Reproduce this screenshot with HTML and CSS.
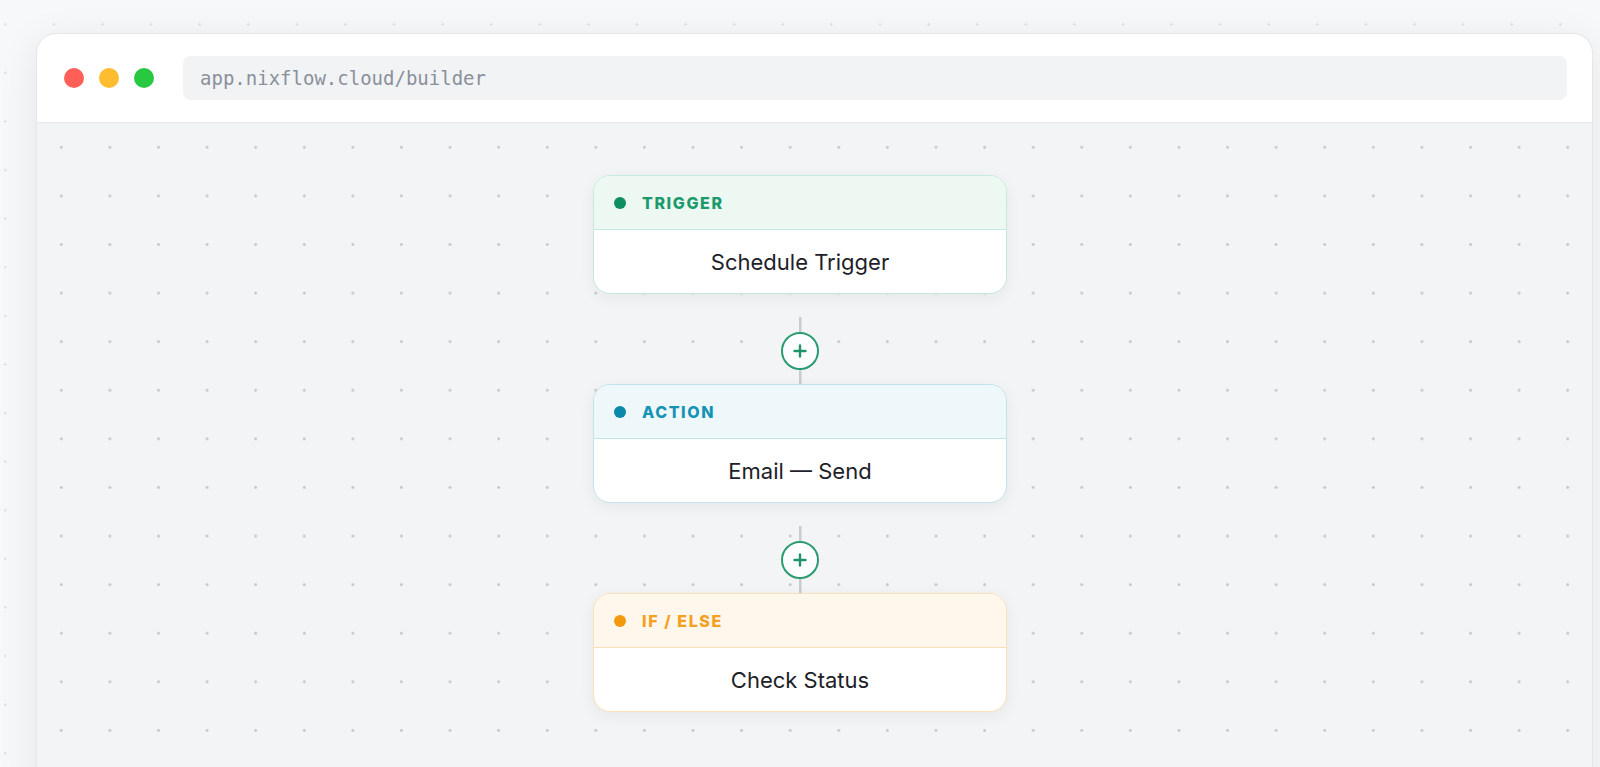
FILE: index.html
```html
<!DOCTYPE html>
<html lang="en">
<head>
  <meta charset="UTF-8" />
  <meta name="viewport" content="width=device-width, initial-scale=1.0" />
  <title>Nixflow Builder</title>
  <link rel="stylesheet" href="styles.css">
</head>
<body>
  <div class="window">
    <div class="titlebar">
      <div class="lights">
        <span class="light red"></span>
        <span class="light yellow"></span>
        <span class="light green"></span>
      </div>
      <div class="url">app.nixflow.cloud/builder</div>
    </div>

    <div class="canvas">
      <div class="flow">
        <div class="node trigger">
          <div class="node-head"><span class="dot"></span>TRIGGER</div>
          <div class="node-body">Schedule Trigger</div>
        </div>

        <div class="connector">
          <button class="add" aria-label="Add step">
            <svg width="14" height="14" viewBox="0 0 14 14"><path d="M7 1.5v11M1.5 7h11" stroke="currentColor" stroke-width="2.4" stroke-linecap="round"/></svg>
          </button>
        </div>

        <div class="node action">
          <div class="node-head"><span class="dot"></span>ACTION</div>
          <div class="node-body">Email — Send</div>
        </div>

        <div class="connector">
          <button class="add" aria-label="Add step">
            <svg width="14" height="14" viewBox="0 0 14 14"><path d="M7 1.5v11M1.5 7h11" stroke="currentColor" stroke-width="2.4" stroke-linecap="round"/></svg>
          </button>
        </div>

        <div class="node branch">
          <div class="node-head"><span class="dot"></span>IF / ELSE</div>
          <div class="node-body">Check Status</div>
        </div>
      </div>
    </div>
  </div>
</body>
</html>
```

FILE: styles.css
```css
html, body {
  height: 100%;
}
body {
  margin: 0;
  overflow: hidden;
  font-family: Inter, "Noto Sans", Arial, sans-serif;
  background-color: #f7f8f9;
  background-image: radial-gradient(circle, #dcdfe2 1px, transparent 1.4px);
  background-size: 48.6px 48.6px;
  background-position: -19px 0;
}
.window {
  margin: 33px 7px 0 36px;
  height: 760px;
  background: #fff;
  border: 1px solid #e4e6e9;
  border-radius: 20px 20px 0 0;
  box-shadow: 0 8px 40px rgba(20, 30, 40, 0.08);
  overflow: hidden;
  display: flex;
  flex-direction: column;
}
.titlebar {
  height: 88px;
  flex: none;
  display: flex;
  align-items: center;
  padding: 0 25px 0 27px;
  border-bottom: 1px solid #e6e8eb;
}
.lights {
  display: flex;
  gap: 15px;
  margin-right: 29px;
}
.light {
  width: 20px;
  height: 20px;
  border-radius: 50%;
}
.red { background: #ff5f57; }
.yellow { background: #febc2e; }
.green { background: #28c840; }
.url {
  flex: 1;
  height: 44px;
  display: flex;
  align-items: center;
  padding-left: 17px;
  background: #f1f3f5;
  border-radius: 8px;
  font-family: "DejaVu Sans Mono", "Liberation Mono", monospace;
  font-size: 19px;
  color: #8a909b;
}
.canvas {
  flex: 1;
  background-color: #f3f4f6;
  background-image: radial-gradient(circle, #c3c7cc 1.1px, transparent 1.6px);
  background-size: 48.6px 48.6px;
  background-position: 0 0;
  padding: 52px 29px 0 0;
}
.flow {
  display: flex;
  flex-direction: column;
  align-items: center;
}
.node {
  width: 414px;
  box-sizing: border-box;
  background: #fff;
  border: 1.5px solid;
  border-radius: 17px;
  overflow: hidden;
  box-shadow: 0 4px 16px rgba(20, 30, 40, 0.06);
}
.node-head {
  height: 53px;
  display: flex;
  align-items: center;
  padding-left: 20px;
  border-bottom: 1.5px solid;
  font-size: 16px;
  font-weight: 800;
  letter-spacing: 1.6px;
}
.dot {
  width: 12px;
  height: 12px;
  border-radius: 50%;
  margin-right: 16px;
  background: currentColor;
}
.node-body {
  height: 63px;
  display: flex;
  align-items: center;
  justify-content: center;
  font-size: 22px;
  color: #1d2127;
}
.trigger { border-color: #c5e9dc; }
.trigger .node-head { background: #edf8f3; border-color: #c5e9dc; color: #1b9a6b; }
.trigger .dot { background: #0f8f60; }
.action { border-color: #c1e3eb; }
.action .node-head { background: #eef8fb; border-color: #c1e3eb; color: #1593b4; }
.action .dot { background: #0b89aa; }
.branch { border-color: #fae0b6; }
.branch .node-head { background: #fff6ec; border-color: #fae0b6; color: #f4a020; }
.branch .dot { background: #f39a0f; }
.connector {
  margin-top: 23px;
  height: 67px;
  width: 40px;
  display: flex;
  align-items: center;
  justify-content: center;
  background: linear-gradient(#c8ccd1, #c8ccd1) center / 2.5px 100% no-repeat;
}
.add {
  width: 38px;
  height: 38px;
  padding: 0;
  border-radius: 50%;
  border: 2px solid #2a9c70;
  background: #fff;
  color: #1f9467;
  display: flex;
  align-items: center;
  justify-content: center;
}
```
